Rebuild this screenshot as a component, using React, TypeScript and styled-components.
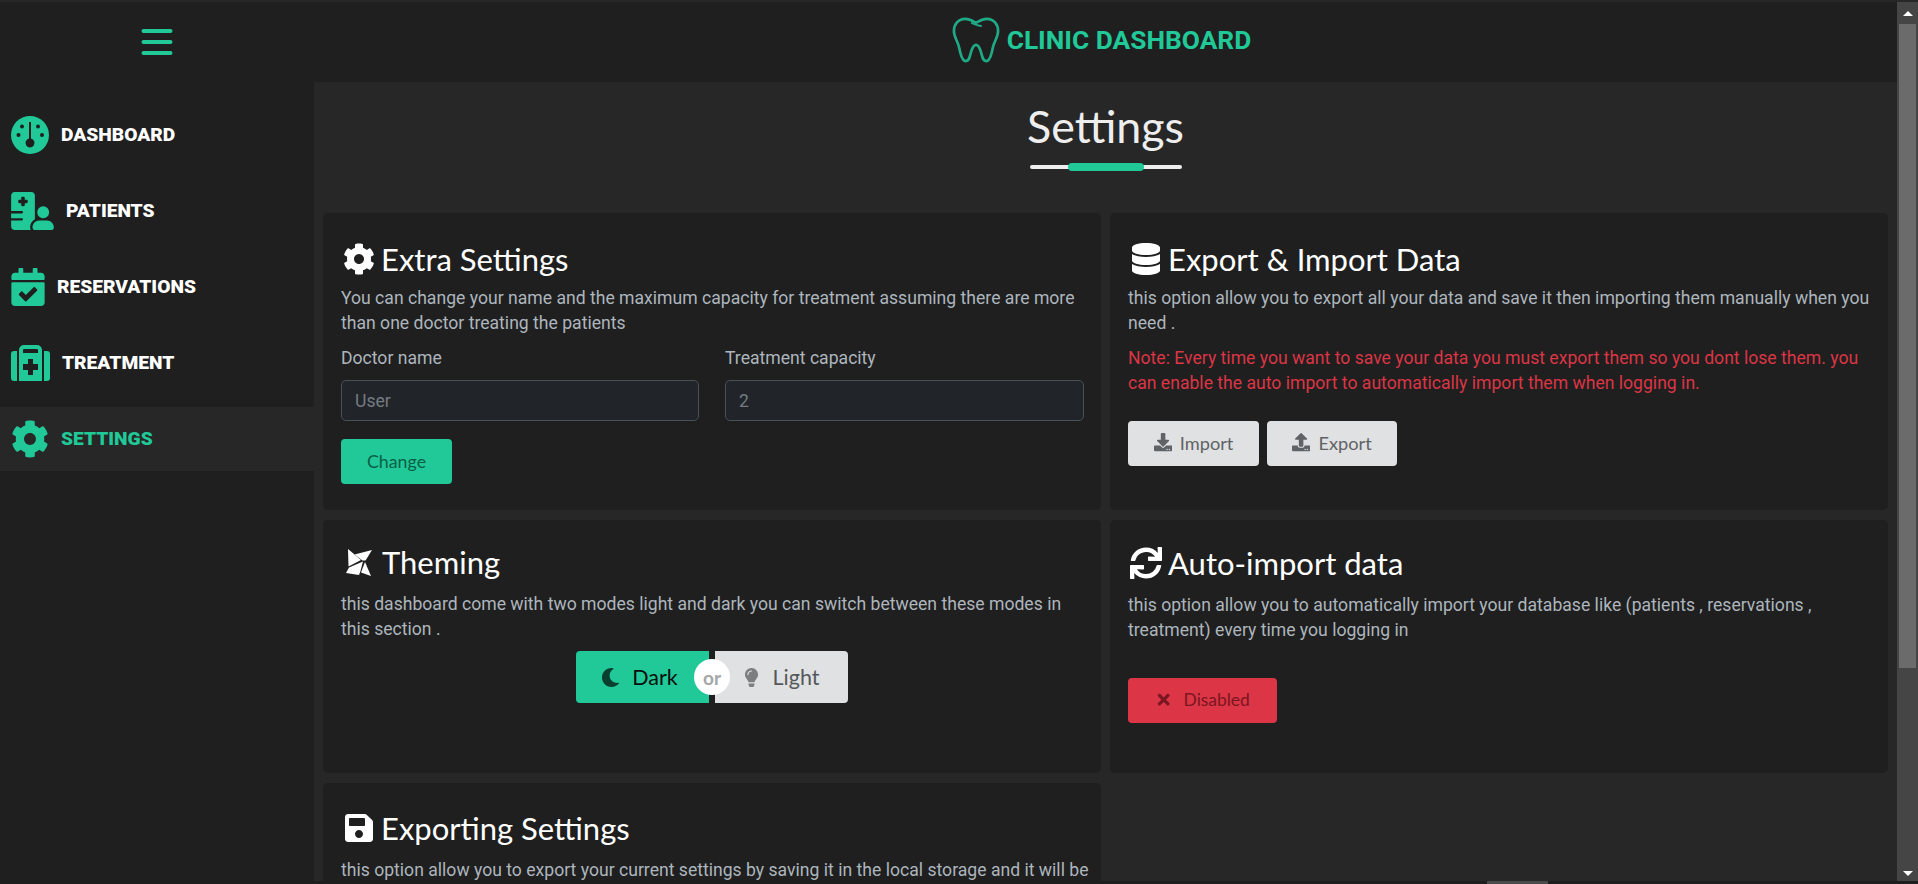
import React from "react";
import styled, { createGlobalStyle } from "styled-components";
import {
  FaCalendarCheck,
  FaCog,
  FaDatabase,
  FaDownload,
  FaLightbulb,
  FaMoon,
  FaSave,
  FaSync,
  FaTimes,
  FaUpload,
} from "react-icons/fa";
import { FaHospitalUser } from "react-icons/fa6";

const GREEN = "#20c997";

const GlobalStyle = createGlobalStyle`
  html, body {
    margin: 0;
    height: 100%;
    overflow: hidden;
    background: #272727;
  }
  #root {
    height: 100%;
  }
  * {
    box-sizing: border-box;
  }
`;

const Page = styled.div`
  display: flex;
  height: 884px;
  position: relative;
  overflow: hidden;
  font-family: Roboto, sans-serif;
`;

const Content = styled.div`
  flex: 1;
  min-width: 0;
  display: flex;
  flex-direction: column;
`;

// top bar
const Topbar = styled.header`
  height: 82px;
  flex: none;
  display: flex;
  background: #1f1f1f;
  border-top: 2px solid #262626;
`;

const MenuCell = styled.div`
  width: 314px;
  display: flex;
  align-items: center;
  justify-content: center;
`;

const Logo = styled.div`
  flex: 1;
  display: flex;
  align-items: center;
  justify-content: center;
  gap: 7px;
  padding: 0 8px 4px 0;
`;

const LogoText = styled.span`
  color: ${GREEN};
  font-size: 26.3px;
  font-weight: 700;
`;

const Body = styled.div`
  flex: 1;
  min-height: 0;
  display: flex;
`;

// sidebar
const Sidebar = styled.nav`
  width: 314px;
  flex: none;
  background: #1f1f1f;
  padding-top: 21px;
  display: flex;
  flex-direction: column;
  gap: 12px;
`;

const NavItem = styled.a<{ $active?: boolean }>`
  height: 64px;
  display: flex;
  align-items: center;
  gap: 12px;
  padding-left: 11px;
  background: ${(p) => (p.$active ? "#272727" : "transparent")};
  color: ${(p) => (p.$active ? GREEN : "#fff")};
  font-size: 19.2px;
  font-weight: 900;
`;

const NavLabel = styled.span`
  padding-bottom: 2px;
`;

const NavIcon = styled.span<{ $width: number }>`
  width: ${(p) => p.$width}px;
  height: 38px;
  display: flex;
  color: ${GREEN};

  svg {
    width: 100%;
    height: 100%;
  }
`;

// main
const Main = styled.main`
  flex: 1;
  min-width: 0;
  padding: 0 9px;
  overflow: hidden;
  background: #272727;
`;

const TitleBlock = styled.div`
  height: 131px;
  display: flex;
  flex-direction: column;
  align-items: center;
  padding-top: 17px;
`;

const PageTitle = styled.h1`
  margin: 0;
  color: #eee;
  font-family: Lato, sans-serif;
  font-size: 44.8px;
  font-weight: 400;
  line-height: 55px;
`;

const TitleLine = styled.div`
  width: 152px;
  height: 4px;
  margin-top: 11px;
  border-radius: 2px;
  background: #eee;
  display: flex;
  align-items: center;
  justify-content: center;
`;

const TitleAccent = styled.div`
  width: 76px;
  height: 8px;
  border-radius: 4px;
  background: ${GREEN};
`;

const Grid = styled.div`
  display: grid;
  grid-template-columns: 1fr 1fr;
  grid-template-rows: 297px 253px auto;
  gap: 10px 9px;
`;

const Card = styled.section<{ $top: number }>`
  background: #1f1f1f;
  border-radius: 5px;
  padding: ${(p) => p.$top}px 12px 18px 18px;
`;

const CardTitle = styled.h2<{ $after: number }>`
  margin: 0 0 ${(p) => p.$after}px;
  display: flex;
  align-items: center;
  gap: 6px;
  height: 40px;
  color: #fff;
  font-family: Lato, sans-serif;
  font-size: 31px;
  font-weight: 400;
`;

const CardIcon = styled.span`
  display: flex;
  font-size: 32px;
  margin-left: 2px;
`;

const Text = styled.p<{ $danger?: boolean }>`
  margin: 0 0 10px;
  color: ${(p) => (p.$danger ? "#dc3545" : "#adb5bd")};
  font-size: 17.6px;
  line-height: 25px;
`;

const FieldRow = styled.div`
  display: grid;
  grid-template-columns: 358px 359px;
  gap: 26px;
`;

const Field = styled.label`
  display: flex;
  flex-direction: column;
  gap: 9px;
  color: #adb5bd;
  font-size: 17.6px;
  line-height: 25px;
`;

const Input = styled.input`
  height: 41px;
  padding: 0 13px;
  background: #212529;
  border: 1px solid #495057;
  border-radius: 5px;
  color: #adb5bd;
  font-family: Roboto, sans-serif;
  font-size: 17.6px;

  &::placeholder {
    color: #757b81;
  }
`;

const Button = styled.button<{ $bg: string; $fg: string }>`
  display: inline-flex;
  align-items: center;
  justify-content: center;
  gap: 8px;
  height: 45px;
  padding: 0 0 2px;
  border: 0;
  border-radius: 4px;
  background: ${(p) => p.$bg};
  color: ${(p) => p.$fg};
  font-family: Lato, sans-serif;
  font-size: 18.2px;
`;

const ChangeButton = styled(Button)`
  margin-top: 18px;
  width: 111px;
  font-size: 17.8px;
`;

const ButtonRow = styled.div`
  display: flex;
  gap: 8px;
  margin-top: 25px;
`;

const WideButton = styled(Button)<{ $width: number }>`
  width: ${(p) => p.$width}px;
`;

const DisabledButton = styled(WideButton)`
  margin-top: 25px;
  gap: 11px;
  font-size: 17.4px;
`;

const Toggle = styled.div`
  display: flex;
  justify-content: center;
  gap: 6px;
  margin: -1px 6px 0 0;
  position: relative;
`;

const ToggleSide = styled.button<{ $left?: boolean }>`
  width: 133px;
  height: 52px;
  display: flex;
  align-items: center;
  justify-content: center;
  gap: 12px;
  border: 0;
  font-family: Lato, sans-serif;
  font-size: 21.500px;
  border-radius: ${(p) => (p.$left ? "4px 0 0 4px" : "0 4px 4px 0")};
  background: ${(p) => (p.$left ? GREEN : "#e0e1e2")};
  color: ${(p) => (p.$left ? "#0a0f0d" : "#55585a")};
  padding: ${(p) => (p.$left ? "0 6px 0 0" : "0 2px 0 0")};
`;

const ToggleIcon = styled.span<{ $dark?: boolean }>`
  display: flex;
  font-size: 19px;
  color: ${(p) => (p.$dark ? "#083f30" : "#7c7e80")};
`;

const OrBadge = styled.span`
  position: absolute;
  left: 50%;
  top: 8px;
  width: 36px;
  height: 36px;
  margin-left: -18px;
  border-radius: 50%;
  background: #fff;
  color: #a4a6a8;
  display: flex;
  align-items: center;
  justify-content: center;
  font-family: Lato, sans-serif;
  font-size: 19px;
  font-weight: 700;
`;

// the window's scrollbar, as seen in the picture
const Scrollbar = styled.div`
  width: 21px;
  flex: none;
  height: 881px;
  margin-top: 2px;
  background: #454545;
  display: flex;
  flex-direction: column;
  align-items: center;
  justify-content: space-between;
  padding: 9px 0 7px;
`;

const Thumb = styled.div`
  position: absolute;
  top: 24px;
  right: 2px;
  width: 17px;
  height: 644px;
  background: #6b6b6b;
`;

const Arrow = styled.span<{ $down?: boolean }>`
  width: 0;
  height: 0;
  border-left: 5px solid transparent;
  border-right: 5px solid transparent;
  border-${(p) => (p.$down ? "top" : "bottom")}: 5px solid #fff;
`;

const BottomStrip = styled.div`
  position: absolute;
  left: 0;
  right: 0;
  bottom: 0;
  height: 3px;
  background: #1e1e1e;
`;

const BottomTab = styled.div`
  position: absolute;
  left: 1487px;
  bottom: 0;
  width: 61px;
  height: 3px;
  background: #4a4a4a;
`;

const Pinwheel = styled.svg`
  margin-left: 3px;
  margin-right: 4px;
`;

const MenuIcon = () => (
  <svg width="32" height="28" viewBox="0 0 32 28">
    <g stroke={GREEN} strokeWidth="4" strokeLinecap="round">
      <line x1="2.500" y1="3" x2="29.500" y2="3" />
      <line x1="2.500" y1="14" x2="29.500" y2="14" />
      <line x1="2.500" y1="25" x2="29.500" y2="25" />
    </g>
  </svg>
);

const ToothIcon = () => (
  <svg width="48" height="48" viewBox="0 0 50 48" fill="none">
    <path
      d="M14 2C6.500 2 2 7.500 2 14.500C2 21 6 25 7.500 32C8.800 39 10.500 46 14.500 46C18.500 46 18.500 40 20.500 34.500C21.800 31 23.500 29 25 29C26.500 29 28.200 31 29.500 34.500C31.500 40 31.500 46 35.500 46C39.500 46 41.200 39 42.500 32C44 25 48 21 48 14.500C48 7.500 43.500 2 36 2C31.500 2 28 4.500 25 6C22 4.500 18.500 2 14 2Z"
      stroke="#1fa985"
      strokeWidth="2.800"
    />
    <path d="M20 6C23 7.500 27 9.500 31 9.500" stroke="#1fa985" strokeWidth="2" />
  </svg>
);

const GaugeIcon = () => (
  <svg viewBox="0 0 38 38">
    <circle cx="19" cy="19" r="19" fill={GREEN} />
    <g fill="#1f1f1f">
      <path d="M18 6h2v16.500a4.500 4.500 0 1 1-2 0z" />
      <circle cx="11" cy="10.500" r="2" />
      <circle cx="27" cy="10.500" r="2" />
      <circle cx="7.500" cy="19" r="2" />
      <circle cx="31" cy="19" r="2" />
    </g>
  </svg>
);

const KitIcon = () => (
  <svg viewBox="0 0 39 36">
    <g fill={GREEN}>
      <path d="M6 6v30H3a3 3 0 0 1-3-3V9a3 3 0 0 1 3-3z" />
      <path d="M33 6v30h3a3 3 0 0 0 3-3V9a3 3 0 0 0-3-3z" />
      <path
        fillRule="evenodd"
        d="M8 36V5a5 5 0 0 1 5-5h13a5 5 0 0 1 5 5v31zM13 4a1 1 0 0 0-1 1v3h15V5a1 1 0 0 0-1-1zM17 14v5h-5v6h5v5h5v-5h5v-6h-5v-5z"
      />
    </g>
  </svg>
);

const PinwheelIcon = () => (
  <Pinwheel width="26" height="28" viewBox="0 0 26 28" fill="#fff">
    <polygon points="2,1 15,12 2.500,18.500" />
    <polygon points="26,2 8.500,6.500 16.500,12.500 19.500,12.500" />
    <polygon points="0,25 3,19.500 17,13.500 14.500,23 13,27" />
    <polygon points="19,14 25,28 15,24.500" />
  </Pinwheel>
);

const navItems = [
  { label: "DASHBOARD", width: 38, icon: <GaugeIcon /> },
  { label: "PATIENTS", width: 43, icon: <FaHospitalUser /> },
  { label: "RESERVATIONS", width: 34, icon: <FaCalendarCheck /> },
  { label: "TREATMENT", width: 39, icon: <KitIcon /> },
  { label: "SETTINGS", width: 38, icon: <FaCog />, active: true },
];

const App: React.FC = () => {
  return (
    <>
      <GlobalStyle />
      <Page>
        <Content>
          <Topbar>
            <MenuCell>
              <MenuIcon />
            </MenuCell>
            <Logo>
              <ToothIcon />
              <LogoText>CLINIC DASHBOARD</LogoText>
            </Logo>
          </Topbar>
          <Body>
            <Sidebar>
              {navItems.map((item) => (
                <NavItem key={item.label} $active={item.active}>
                  <NavIcon $width={item.width}>{item.icon}</NavIcon>
                  <NavLabel>{item.label}</NavLabel>
                </NavItem>
              ))}
            </Sidebar>
            <Main>
              <TitleBlock>
                <PageTitle>Settings</PageTitle>
                <TitleLine>
                  <TitleAccent />
                </TitleLine>
              </TitleBlock>
              <Grid>
                <Card $top={26}>
                  <CardTitle $after={7}>
                    <CardIcon><FaCog /></CardIcon>
                    Extra Settings
                  </CardTitle>
                  <Text>
                    You can change your name and the maximum capacity for treatment assuming there are more than one doctor treating the patients
                  </Text>
                  <FieldRow>
                    <Field>
                      Doctor name
                      <Input placeholder="User" />
                    </Field>
                    <Field>
                      Treatment capacity
                      <Input placeholder="2" />
                    </Field>
                  </FieldRow>
                  <ChangeButton $bg={GREEN} $fg="#0b5f48">Change</ChangeButton>
                </Card>
                <Card $top={26}>
                  <CardTitle $after={7}>
                    <CardIcon><FaDatabase /></CardIcon>
                    Export &amp; Import Data
                  </CardTitle>
                  <Text>
                    this option allow you to export all your data and save it then importing them manually when you need .
                  </Text>
                  <Text $danger>
                    Note: Every time you want to save your data you must export them so you dont lose them. you can enable the auto import to automatically import them when logging in.
                  </Text>
                  <ButtonRow>
                    <WideButton $width={131} $bg="#e0e1e2" $fg="#5f6366"><FaDownload />Import</WideButton>
                    <WideButton $width={130} $bg="#e0e1e2" $fg="#5f6366"><FaUpload />Export</WideButton>
                  </ButtonRow>
                </Card>
                <Card $top={22}>
                  <CardTitle $after={10}>
                    <CardIcon><PinwheelIcon /></CardIcon>
                    Theming
                  </CardTitle>
                  <Text>
                    this dashboard come with two modes light and dark you can switch between these modes in this section .
                  </Text>
                  <Toggle>
                    <ToggleSide $left>
                      <ToggleIcon $dark><FaMoon /></ToggleIcon>
                      Dark
                    </ToggleSide>
                    <ToggleSide>
                      <ToggleIcon><FaLightbulb /></ToggleIcon>
                      Light
                    </ToggleSide>
                    <OrBadge>or</OrBadge>
                  </Toggle>
                </Card>
                <Card $top={23}>
                  <CardTitle $after={10}>
                    <CardIcon><FaSync /></CardIcon>
                    Auto-import data
                  </CardTitle>
                  <Text>
                    this option allow you to automatically import your database like (patients , reservations , treatment) every time you logging in
                  </Text>
                  <DisabledButton $width={149} $bg="#dc3545" $fg="#7a1522"><FaTimes />Disabled</DisabledButton>
                </Card>
                <Card $top={25}>
                  <CardTitle $after={10}>
                    <CardIcon><FaSave /></CardIcon>
                    Exporting Settings
                  </CardTitle>
                  <Text>
                    this option allow you to export your current settings by saving it in the local storage and it will be imported automatically when you log in again .
                  </Text>
                </Card>
              </Grid>
            </Main>
          </Body>
        </Content>
        <Scrollbar>
          <Arrow />
          <Arrow $down />
        </Scrollbar>
        <Thumb />
        <BottomStrip />
        <BottomTab />
      </Page>
    </>
  );
};

export default App;
